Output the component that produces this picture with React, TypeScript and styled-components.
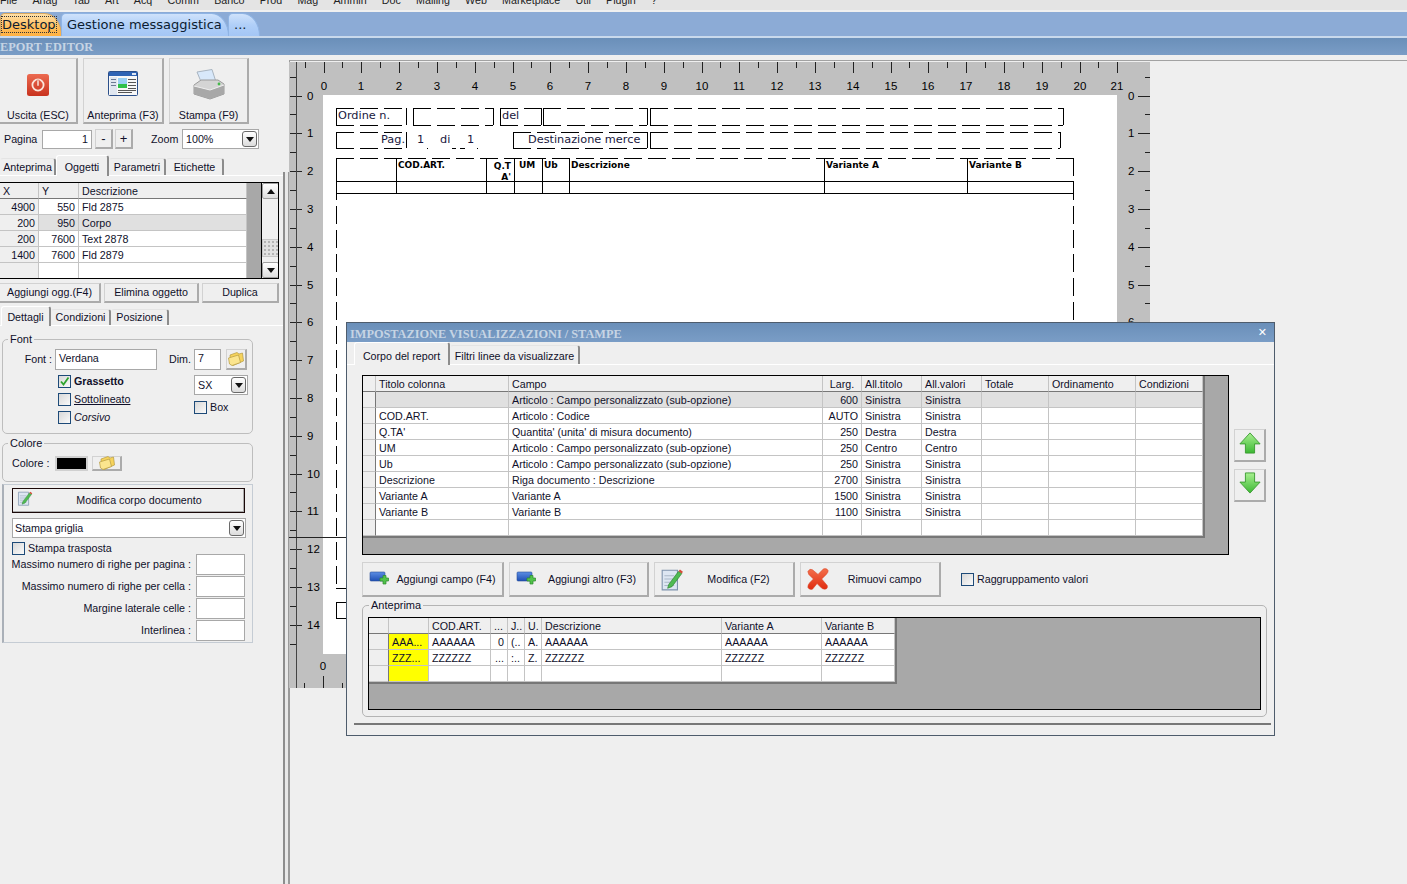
import React from 'react';
import styled, { createGlobalStyle } from 'styled-components';

const GlobalStyle = createGlobalStyle`
  html, body {
    margin: 0;
    padding: 0;
    background: #efefef;
  }
  * {
    box-sizing: border-box;
  }
`;

const Page = styled.div`
  position: relative;
  width: 1407px;
  height: 884px;
  overflow: hidden;
  display: flex;
  flex-direction: column;
  background: #efefef;
  color: #10102a;
  font: 10.7px/13px 'Liberation Sans', Arial, sans-serif;
`;

/* top of the application */
const MenuBar = styled.div`
  height: 10px;
  flex: none;
  overflow: hidden;
  display: flex;
  gap: 15.2px;
  background: #e4e4e4;
  span {
    margin-top: -6px;
    color: #222;
  }
`;

const TabStrip = styled.div`
  height: 28px;
  flex: none;
  display: flex;
  align-items: flex-start;
  padding-top: 1px;
  border-top: 2px solid #f0f0f0;
  border-bottom: 2px solid #c9d9ec;
  background: #8cabd6;
`;

const AppTab = styled.div<{ $active?: boolean; $w: number }>`
  width: ${(p) => p.$w}px;
  height: 23px;
  margin-right: -1px;
  padding: 3px 0 0 ${(p) => (p.$active ? 1 : 5)}px;
  border-radius: 5px 18px 0 0 / 5px 24px 0 0;
  border: 1px solid ${(p) => (p.$active ? '#d8a860' : '#8fb4e4')};
  border-bottom: 0;
  background: ${(p) =>
    p.$active
      ? 'linear-gradient(#ffe0a8, #ffc060 55%, #ffb040)'
      : 'linear-gradient(#cfe2fb, #b0cff8 50%, #a4c6f5)'};
  color: #0c1c30;
  font: 13px/15px 'DejaVu Sans', Verdana, sans-serif;
  white-space: nowrap;
`;

const FocusText = styled.span`
  outline: 1px dotted #333;
`;

const WindowTitle = styled.div<{ $height: number; $indent: number }>`
  height: ${(p) => p.$height}px;
  flex: none;
  display: flex;
  align-items: center;
  justify-content: space-between;
  padding: 0 7px 0 ${(p) => p.$indent}px;
  background: linear-gradient(#6a8fb9, #7a9dc6);
  color: #c6d4e4;
  font: bold 12.3px/16px 'Liberation Serif', 'Times New Roman', serif;
  white-space: nowrap;
`;

const DialogTitleText = styled.span`
  margin-top: 3px;
`;

const Main = styled.div`
  flex: 1;
  display: flex;
  min-height: 0;
`;

/* generic widgets */
const RaisedButton = styled.button<{ $w?: number; $h?: number }>`
  width: ${(p) => (p.$w ? `${p.$w}px` : 'auto')};
  height: ${(p) => (p.$h ? `${p.$h}px` : 'auto')};
  flex: none;
  padding: 0;
  border-style: solid;
  border-width: 1px 2px 2px 1px;
  border-color: #d2d2d2 #ababab #ababab #d2d2d2;
  background: #efefef;
  color: inherit;
  font: inherit;
  display: flex;
  align-items: center;
  justify-content: center;
`;

const FieldBox = styled.div<{ $w: number; $h?: number; $right?: boolean }>`
  width: ${(p) => p.$w}px;
  height: ${(p) => p.$h ?? 20}px;
  flex: none;
  padding: 2px 3px;
  border: 1px solid #a8a8a8;
  background: #fff;
  text-align: ${(p) => (p.$right ? 'right' : 'left')};
`;

const ComboBox = styled(FieldBox)`
  display: flex;
  align-items: center;
  justify-content: space-between;
  padding: 0 1px 0 3px;
`;

const ArrowButton = styled.span`
  width: 15px;
  height: 16px;
  display: flex;
  align-items: center;
  justify-content: center;
  border: 1px solid #6a6a6a;
  border-radius: 3px;
  background: linear-gradient(#fff, #dcdcdc);
  &::after {
    content: '';
    border: 4px solid transparent;
    border-top: 5px solid #111;
    border-bottom: 0;
  }
`;

const Check = styled.span`
  width: 13px;
  height: 13px;
  flex: none;
  display: inline-flex;
  border: 1px solid #1d4a78;
  background: linear-gradient(135deg, #d8d8d8, #fafafa);
`;

const CheckRow = styled.div`
  display: flex;
  align-items: center;
  gap: 3px;
  height: 13px;
`;

const TabRow = styled.div<{ $h: number; $indent: number }>`
  height: ${(p) => p.$h}px;
  display: flex;
  align-items: flex-end;
  padding-left: ${(p) => p.$indent}px;
  border-bottom: 1px solid #fff;
`;

const PaneTab = styled.div<{ $w: number; $active?: boolean }>`
  width: ${(p) => p.$w}px;
  height: ${(p) => (p.$active ? 'calc(100% + 1px)' : 'calc(100% - 3px)')};
  flex: none;
  display: flex;
  align-items: flex-end;
  justify-content: center;
  padding-bottom: ${(p) => (p.$active ? 2 : 1)}px;
  white-space: nowrap;
  border-right: 2px solid #8c8c8c;
  border-top: 1px solid ${(p) => (p.$active ? '#fff' : '#e4e4e4')};
  border-left: 1px solid ${(p) => (p.$active ? '#fff' : '#efefef')};
  margin-bottom: ${(p) => (p.$active ? '-1px' : '0')};
  border-radius: 3px 3px 0 0;
  background: #efefef;
`;

/* data grids */
const GridFrame = styled.div<{ $w: number; $h: number }>`
  width: ${(p) => p.$w}px;
  height: ${(p) => p.$h}px;
  flex: none;
  display: flex;
  align-items: flex-start;
  overflow: hidden;
  border: 1px solid #000;
  background: #a8a8a8;
`;

const GridTable = styled.table<{ $w: number; $edge?: boolean }>`
  width: ${(p) => p.$w}px;
  flex: none;
  table-layout: fixed;
  border-collapse: separate;
  border-spacing: 0;
  background: #fff;
  font: inherit;
  color: inherit;
  ${(p) => (p.$edge ? 'border-right: 2px solid #777; border-bottom: 2px solid #777;' : '')}
`;

const HeadCell = styled.th<{ $center?: boolean }>`
  height: 16px;
  padding: 1px 3px 0;
  overflow: hidden;
  border-right: 1px solid #c4c4c4;
  border-bottom: 1px solid #777;
  background: #efefef;
  font-weight: normal;
  text-align: ${(p) => (p.$center ? 'center' : 'left')};
  white-space: nowrap;
`;

const Cell = styled.td<{ $right?: boolean; $bg?: string }>`
  height: 16px;
  padding: 1px 3px 0;
  overflow: hidden;
  border-right: 1px solid #c4c4c4;
  border-bottom: 1px solid #c4c4c4;
  background: ${(p) => p.$bg ?? 'transparent'};
  text-align: ${(p) => (p.$right ? 'right' : 'left')};
  white-space: nowrap;
`;

const RowHead = styled(Cell)`
  padding: 0;
  background: #efefef;
  border-right-color: #777;
`;

/* left panel */
const LeftPanel = styled.div`
  width: 283px;
  flex: none;
  overflow: hidden;
`;

const Toolbar = styled.div`
  display: flex;
  gap: 5px;
  margin: 3px 0 0 -1px;
`;

const ToolButton = styled(RaisedButton)`
  flex-direction: column;
  justify-content: flex-start;
  padding-top: 10px;
  & > svg {
    height: 31px;
    flex: none;
  }
  & > span {
    margin-top: 9px;
  }
`;

const PagerRow = styled.div`
  display: flex;
  align-items: center;
  height: 20px;
  margin-top: 5px;
  padding-left: 4px;
`;

const PagerLabel = styled.span<{ $w: number }>`
  width: ${(p) => p.$w}px;
  flex: none;
`;

const SmallButton = styled(RaisedButton)`
  margin-right: 2px;
  font-size: 13px;
`;

const TabsTop = styled.div`
  margin-top: 6px;
`;

const ObjectsGridRow = styled.div`
  margin: 6px 0 0 -1px;
`;

const Filler = styled.div`
  width: 14px;
  height: 100%;
  flex: none;
`;

const ScrollBar = styled.div`
  width: 18px;
  height: 100%;
  flex: none;
  display: flex;
  flex-direction: column;
  justify-content: space-between;
  background: #f0f0f0;
  border-left: 1px solid #000;
`;

const ScrollThumb = styled.div`
  height: 18px;
  margin-top: 39px;
  margin-bottom: 5px;
  background: radial-gradient(#b5b5b5 1px, transparent 1px) 0 0 / 4px 4px, #e2e2e2;
  border: 1px solid #c8c8c8;
`;

const ScrollEnd = styled.div<{ $up?: boolean }>`
  height: 16px;
  display: flex;
  align-items: center;
  justify-content: center;
  background: linear-gradient(#fff, #dedede);
  border: 1px solid #a0a0a0;
  border-radius: 2px;
  &::after {
    content: '';
    border: 4px solid transparent;
    ${(p) => (p.$up ? 'border-bottom: 5px solid #111; border-top: 0;' : 'border-top: 5px solid #111; border-bottom: 0;')}
  }
`;

const ObjectActions = styled.div`
  display: flex;
  gap: 3px;
  margin-top: 4px;
  margin-left: -1px;
`;

const TabsBottom = styled.div`
  margin-top: 3px;
  width: 283px;
`;

const Fieldset = styled.fieldset<{ $h: number }>`
  height: ${(p) => p.$h}px;
  width: 251px;
  margin: 0 0 0 2px;
  padding: 0;
  border: 1px solid #bdbdbd;
  border-radius: 5px;
`;

const Legend = styled.legend`
  margin-left: 5px;
  padding: 0 2px;
  font-size: 11px;
  line-height: 12px;
`;

const PreviewLegend = styled(Legend)`
  margin-left: 1px;
`;

const FontFieldset = styled(Fieldset)`
  margin-top: 7px;
`;

const ColorFieldset = styled(Fieldset)`
  margin-top: 3px;
`;

const FontRow = styled.div`
  display: flex;
  align-items: center;
  height: 21px;
  margin-top: 4px;
`;

const RightLabel = styled.span<{ $w: number }>`
  width: ${(p) => p.$w}px;
  flex: none;
  text-align: right;
`;

const FontOptions = styled.div`
  display: flex;
  margin-top: 5px;
`;

const OptionColumn = styled.div`
  width: 191px;
  flex: none;
  padding-left: 55px;
  display: flex;
  flex-direction: column;
  gap: 5px;
`;

const SideColumn = styled.div`
  display: flex;
  flex-direction: column;
  gap: 6px;
`;

const BoldLabel = styled.span`
  font-weight: bold;
`;

const UnderLabel = styled.span`
  text-decoration: underline;
`;

const ItalicLabel = styled.span`
  font-style: italic;
`;

const ColorRow = styled.div`
  display: flex;
  align-items: center;
  height: 18px;
  margin-top: 5px;
  padding-left: 9px;
`;

const ColorSwatch = styled.div`
  width: 33px;
  height: 15px;
  margin-right: 4px;
  border: 2px solid #d0d0d0;
  background: #000;
  box-shadow: inset 0 0 0 1px #000;
`;

const BodyBox = styled.div`
  width: 251px;
  height: 159px;
  margin: 2px 0 0 2px;
  padding: 3px 0 0 8px;
  border: 1px solid #c5ccd4;
  border-left: 2px solid #aab0b8;
`;

const EditBodyButton = styled(RaisedButton)`
  position: relative;
  outline: 1px solid #1a0808;
  outline-offset: -1px;
  justify-content: center;
  padding: 1px 0 0 22px;
  svg {
    position: absolute;
    left: 4px;
    top: 1px;
  }
`;

const BodyCombo = styled(ComboBox)`
  margin-top: 5px;
  padding-left: 2px;
`;

const TransposeRow = styled(CheckRow)`
  margin-top: 4px;
`;

const NumberRows = styled.div`
  margin-top: -2px;
`;

const NumberRow = styled.div`
  display: flex;
  align-items: center;
  justify-content: flex-end;
  gap: 5px;
  width: 233px;
  height: 22px;
  white-space: nowrap;
`;

const Splitter = styled.div`
  width: 6px;
  flex: none;
  margin-top: 117px;
  border-left: 2px solid #8d8d8d;
  border-right: 1px solid #9a9a9a;
  background: #e8e8e8;
`;

/* report canvas */
const Viewport = styled.div`
  flex: 1;
  margin-top: 5px;
  padding: 1px 0 0;
  border-top: 1px solid #a2a2a2;
  border-left: 1px solid #9a9a9a;
`;

const RulerFrame = styled.div`
  position: relative;
  width: 861px;
  height: 626px;
  margin-left: -1px;
  padding: 33px 33px 34px 34px;
  background: #c0c0c0;
`;

const Sheet = styled.div`
  position: relative;
  width: 100%;
  height: 100%;
  background: #fff;
  font-family: 'DejaVu Sans', Verdana, sans-serif;
`;

const Overlay = styled.svg`
  position: absolute;
  left: 0;
  top: 0;
  width: 100%;
  height: 100%;
  overflow: visible;
`;

const ReportText = styled.div<{ $x: number; $y: number; $bold?: boolean; $right?: boolean }>`
  position: absolute;
  ${(p) => (p.$right ? `right: ${1117 - p.$x}px;` : `left: ${p.$x - 323}px;`)}
  top: ${(p) => p.$y - 95}px;
  color: ${(p) => (p.$bold ? '#000' : '#181840')};
  font-size: ${(p) => (p.$bold ? 9 : 11.3)}px;
  font-weight: ${(p) => (p.$bold ? 'bold' : 'normal')};
  line-height: 13px;
  white-space: nowrap;
`;

/* dialog */
const Dialog = styled.div`
  position: absolute;
  left: 346px;
  top: 322px;
  width: 929px;
  height: 414px;
  display: flex;
  flex-direction: column;
  border: 1px solid #4e5c6c;
  background: #efefef;
`;

const CloseMark = styled.span`
  color: #fff;
  font: bold 11px/12px 'DejaVu Sans', sans-serif;
`;

const DialogPane = styled.div`
  width: 917px;
  height: 360px;
  margin-left: 7px;
  padding: 10px 0 0 8px;
  border-bottom: 2px solid #777;
`;

const GridRow = styled.div`
  display: flex;
`;

const MoveColumn = styled.div`
  display: flex;
  flex-direction: column;
  justify-content: center;
  gap: 7px;
  margin-left: 5px;
`;

const MoveButton = styled(RaisedButton)`
  padding-bottom: 3px;
`;

const ActionRow = styled.div`
  display: flex;
  align-items: center;
  gap: 5px;
  margin-top: 7px;
`;

const ActionButton = styled(RaisedButton)`
  justify-content: flex-start;
  padding: 0 0 0 5px;
  span {
    flex: 1;
    text-align: center;
  }
`;

const GroupCheck = styled(CheckRow)`
  margin-left: 15px;
`;

const PreviewFieldset = styled.fieldset`
  width: 905px;
  height: 118px;
  margin: 2px 0 0;
  padding: 6px 0 0 5px;
  border: 1px solid #b4b4b4;
  border-radius: 5px;
`;

/* drawings */
const PowerIcon = () => (
  <svg width="24" height="31" viewBox="0 0 24 31">
    <defs>
      <linearGradient id="pw" x1="0" y1="0" x2="0" y2="1">
        <stop offset="0" stopColor="#ec6a50" />
        <stop offset="1" stopColor="#c8321e" />
      </linearGradient>
    </defs>
    <rect x="1" y="5" width="22" height="22" rx="2.5" fill="url(#pw)" />
    <circle cx="12" cy="16" r="5.6" fill="none" stroke="#fbe6dc" strokeWidth="1.8" />
    <rect x="11" y="11" width="2" height="6" fill="#fbe6dc" stroke="#d04a34" strokeWidth=".5" />
  </svg>
);

const PreviewIcon = () => (
  <svg width="32" height="31" viewBox="0 0 32 31">
    <rect x="1.5" y="2.5" width="29" height="24" rx="1" fill="#f7f7f7" stroke="#2b4f8a" />
    <rect x="2" y="3" width="28" height="4" fill="#2e63b4" />
    <rect x="25" y="4" width="4" height="2" fill="#dfe8f5" />
    <rect x="3" y="8" width="7" height="18" fill="#dfe6f0" />
    <rect x="4" y="10" width="5" height="1" fill="#6a7a94" />
    <rect x="4" y="13" width="5" height="1" fill="#6a7a94" />
    <rect x="4" y="16" width="5" height="1" fill="#6a7a94" />
    <rect x="11" y="9" width="9" height="6" fill="#9ad0f4" />
    <rect x="11" y="15" width="9" height="4" fill="#2fc04a" />
    <rect x="21" y="10" width="8" height="1" fill="#555" />
    <rect x="21" y="13" width="8" height="1" fill="#555" />
    <rect x="21" y="16" width="8" height="1" fill="#555" />
    <rect x="21" y="19" width="8" height="1" fill="#555" />
    <rect x="11" y="21" width="18" height="1" fill="#555" />
    <rect x="11" y="23" width="14" height="1" fill="#555" />
  </svg>
);

const PrinterIcon = () => (
  <svg width="34" height="31" viewBox="0 0 34 31">
    <path d="M5 3 L20 0.5 L24 13 L10 15 Z" fill="#d8e8fa" stroke="#a8b4c0" />
    <path d="M2 16 L9 11 H26 L32 15 V25 L18 30 L2 25 Z" fill="#d4d4d4" stroke="#9a9a9a" />
    <path d="M2 17 L18 21 L32 16 V25 L18 30 L2 25 Z" fill="#a8a8a8" />
    <path d="M2 17 L18 21 L32 16" fill="none" stroke="#efefef" />
    <circle cx="27" cy="15" r="1.4" fill="#45b84a" />
  </svg>
);

const FolderIcon = () => (
  <svg width="18" height="16" viewBox="0 0 18 16">
    <path d="M3 4 L10 1.5 L12 3 L15.5 2 L16.5 10 L6 14.5 L3.5 13 Z" fill="#f6d35c" stroke="#b49a40" strokeWidth=".7" />
    <path d="M1.5 7 L11.5 4 L13.5 11.5 L5 14.5 L2.5 13 Z" fill="#fbe58e" stroke="#b49a40" strokeWidth=".7" />
  </svg>
);

const EditIcon = ({ size }: { size: number }) => (
  <svg width={size} height={size} viewBox="0 0 22 22">
    <path d="M2 3 H16 V21 H2 Z" fill="#dde6f2" stroke="#7f93ad" />
    <path d="M4 8 H13 M4 11 H13 M4 14 H10 M4 17 H13" stroke="#aab8c8" />
    <path d="M8 16 L17 4 L20 6 L11 18 L7 19.5 Z" fill="#4fbb52" stroke="#2c7f30" strokeWidth=".6" />
    <path d="M17 4 L18.3 2.4 L21 4.4 L20 6 Z" fill="#d84a38" />
  </svg>
);

const AddFieldIcon = () => (
  <svg width="22" height="20" viewBox="0 0 22 20">
    <defs>
      <linearGradient id="af" x1="0" y1="0" x2="0" y2="1">
        <stop offset="0" stopColor="#5c8ee4" />
        <stop offset="1" stopColor="#1f4fb4" />
      </linearGradient>
    </defs>
    <rect x="2" y="3" width="15" height="9" rx="1" fill="url(#af)" stroke="#2a4f98" strokeWidth=".6" />
    <path d="M12 9 H15 V6.5 H18 V9 H20.5 V12 H18 V15 H15 V12 H12 Z" fill="#52c24a" stroke="#2d8a2c" strokeWidth=".7" />
  </svg>
);

const RedCross = () => (
  <svg width="24" height="24" viewBox="0 0 26 26">
    <defs>
      <linearGradient id="rc" x1="0" y1="0" x2="0" y2="1">
        <stop offset="0" stopColor="#f4704c" />
        <stop offset="1" stopColor="#e02c10" />
      </linearGradient>
    </defs>
    <path
      d="M2 5 Q4 1 7 3 L13 8 L19 2 Q23 1 24 4 Q24 6 22 8 L17 13 L23 20 Q24 24 20 24 Q18 24 16 22 L12 18 L7 24 Q3 25 2 22 Q2 19 4 17 L8 13 L3 8 Z"
      fill="url(#rc)"
      stroke="#d84020"
      strokeWidth=".6"
    />
  </svg>
);

const MoveArrow = ({ down }: { down?: boolean }) => (
  <svg width="22" height="22" viewBox="0 0 24 24">
    <defs>
      <linearGradient id="mv" x1="0" y1="0" x2="0" y2="1">
        <stop offset="0" stopColor="#a8f090" />
        <stop offset="1" stopColor="#3cb834" />
      </linearGradient>
    </defs>
    <path
      d={down ? 'M7 1 H17 V11 H23 L12 23 L1 11 H7 Z' : 'M12 1 L23 13 H17 V23 H7 V13 H1 Z'}
      fill="url(#mv)"
      stroke="#3a9a30"
    />
  </svg>
);

const CheckMark = () => (
  <svg width="11" height="11" viewBox="0 0 11 11">
    <path d="M2 5.5 L4.5 8.5 L9.5 1.5" fill="none" stroke="#2fa52f" strokeWidth="1.8" />
  </svg>
);

const CM = 37.8;
const range = (n: number) => Array.from({ length: n }, (_, i) => i);

const Ruler = () => {
  const line = '#222';
  return (
    <Overlay viewBox="289 62 861 626" fontFamily="'Liberation Sans', Arial, sans-serif" fontSize="11.5">
      {range(22).map((i) => {
        const x = Math.round(323.5 + i * CM) + 0.5;
        return (
          <g key={i}>
            <path d={`M${x} 62 V73`} stroke={line} />
            <text x={x - 0.5} y={90} textAnchor="middle" fill="#000">{i}</text>
          </g>
        );
      })}
      {range(22).map((i) => {
        const x = Math.round(304.6 + i * CM) + 0.5;
        return <path key={i} d={`M${x} 62 V68`} stroke={line} />;
      })}
      {range(15).map((i) => {
        const y = Math.round(95.5 + i * CM) + 0.5;
        return (
          <g key={i}>
            <path d={`M290 ${y} H302 M1138 ${y} H1150`} stroke={line} />
            <text x={307} y={y + 3.5} fill="#000">{i}</text>
            <text x={1128} y={y + 3.5} fill="#000">{i}</text>
          </g>
        );
      })}
      {range(16).map((i) => {
        const y = Math.round(76.6 + i * CM) + 0.5;
        return <path key={i} d={`M290 ${y} H297 M1145 ${y} H1150`} stroke={line} />;
      })}
      <path d="M296.5 62 V688" stroke="#444" />
      <path d="M289 537.5 H347" stroke="#222" />
      <text x={323} y={670} textAnchor="middle" fill="#000">0</text>
      <path d="M323.5 676 V688 M304.5 683 V688 M342.5 683 V688" stroke={line} />
    </Overlay>
  );
};

// dashed frames as the print engine draws them: 18 on, 6 off
const dashed = [
  'M336 108.5 H406', 'M336 125.5 H406', 'M406.5 108 V125',
  'M413 108.5 H493', 'M413 125.5 H493', 'M493.5 108 V125',
  'M500 108.5 H541', 'M500 125.5 H541', 'M541.5 108 V125',
  'M543 108.5 H647', 'M543 125.5 H647', 'M647.5 108 V125',
  'M650 108.5 H1063', 'M650 125.5 H1063', 'M1063.5 108 V125',
  'M336 132.5 H406', 'M336 148.5 H406', 'M406.5 132 V148',
  'M513 132.5 H647', 'M513 148.5 H647', 'M647.5 132 V148',
  'M650 132.5 H1060', 'M650 148.5 H1060', 'M1060.5 132 V148',
  'M336 158.5 H1073', 'M336.5 158 V588', 'M1073.5 158 V588',
  'M336 602.5 H347', 'M336 618.5 H347',
];

const solid = [
  'M336.5 108 V125', 'M413.5 108 V125', 'M500.5 108 V125', 'M543.5 108 V125', 'M650.5 108 V125',
  'M336.5 132 V148', 'M513.5 132 V148', 'M650.5 132 V148',
  'M336 181.5 H1073', 'M336 193.5 H1073',
  'M336.5 158 V193', 'M396.5 158 V193', 'M486.5 158 V193', 'M514.5 158 V193', 'M542.5 158 V193',
  'M569.5 158 V193', 'M824.5 158 V193', 'M967.5 158 V193', 'M1073.5 181 V193',
  'M336 588.5 H347', 'M336.5 602 V618',
  'M427 148.5 H428', 'M452 148.5 H456', 'M460 148.5 H465', 'M477 148.5 H478',
];

const ReportLines = () => (
  <Overlay viewBox="323 95 794 559" fill="none" stroke="#000">
    {dashed.map((d) => <path key={d} d={d} strokeDasharray="18 6" />)}
    {solid.map((d) => <path key={d} d={d} />)}
  </Overlay>
);

const reportTexts: { t: string; x: number; y: number; bold?: boolean; right?: boolean }[] = [
  { t: 'Ordine n.', x: 338, y: 109 },
  { t: 'del', x: 502, y: 109 },
  { t: 'Pag.', x: 405, y: 133, right: true },
  { t: '1', x: 417, y: 133 },
  { t: 'di', x: 440, y: 133 },
  { t: '1', x: 467, y: 133 },
  { t: 'Destinazione merce', x: 528, y: 133 },
  { t: 'COD.ART.', x: 398, y: 159, bold: true },
  { t: 'Q.T', x: 511, y: 160, bold: true, right: true },
  { t: "A'", x: 511, y: 171, bold: true, right: true },
  { t: 'UM', x: 519, y: 159, bold: true },
  { t: 'Ub', x: 544, y: 159, bold: true },
  { t: 'Descrizione', x: 571, y: 159, bold: true },
  { t: 'Variante A', x: 826, y: 159, bold: true },
  { t: 'Variante B', x: 969, y: 159, bold: true },
];

const objectRows = [
  ['4900', '550', 'Fld 2875'],
  ['200', '950', 'Corpo'],
  ['200', '7600', 'Text 2878'],
  ['1400', '7600', 'Fld 2879'],
  ['', '', ''],
];

const bodyWidths = [13, 133, 314, 39, 60, 60, 67, 87, 67];
const bodyHeads = ['', 'Titolo colonna', 'Campo', 'Larg.', 'All.titolo', 'All.valori', 'Totale', 'Ordinamento', 'Condizioni'];
const bodyRows = [
  ['', 'Articolo : Campo personalizzato (sub-opzione)', '600', 'Sinistra', 'Sinistra'],
  ['COD.ART.', 'Articolo : Codice', 'AUTO', 'Sinistra', 'Sinistra'],
  ["Q.TA'", "Quantita' (unita' di misura documento)", '250', 'Destra', 'Destra'],
  ['UM', 'Articolo : Campo personalizzato (sub-opzione)', '250', 'Centro', 'Centro'],
  ['Ub', 'Articolo : Campo personalizzato (sub-opzione)', '250', 'Sinistra', 'Sinistra'],
  ['Descrizione', 'Riga documento : Descrizione', '2700', 'Sinistra', 'Sinistra'],
  ['Variante A', 'Variante A', '1500', 'Sinistra', 'Sinistra'],
  ['Variante B', 'Variante B', '1100', 'Sinistra', 'Sinistra'],
  ['', '', '', '', ''],
];

const previewWidths = [20, 40, 62, 17, 17, 17, 180, 100, 73];
const previewHeads = ['', '', 'COD.ART.', '...', 'J..', 'U.', 'Descrizione', 'Variante A', 'Variante B'];
const previewRows = [
  ['AAA...', 'AAAAAA', '0', '(..', 'A.', 'AAAAAA', 'AAAAAA', 'AAAAAA'],
  ['ZZZ...', 'ZZZZZZ', '...', ':..', 'Z.', 'ZZZZZZ', 'ZZZZZZ', 'ZZZZZZ'],
  ['', '', '', '', '', '', '', ''],
];

const sum = (list: number[]) => list.reduce((a, b) => a + b, 0);

const App: React.FC = () => {
  return (
    <Page>
      <GlobalStyle />
      <MenuBar>
        {['File', 'Anag', 'Tab', 'Art', 'Acq', 'Comm', 'Banco', 'Prod', 'Mag', 'Ammin', 'Doc', 'Mailing', 'Web', 'Marketplace', 'Util', 'Plugin', '?'].map((m) => (
          <span key={m}>{m}</span>
        ))}
      </MenuBar>
      <TabStrip>
        <AppTab $active $w={62}><FocusText>Desktop</FocusText></AppTab>
        <AppTab $w={168}>Gestione messaggistica</AppTab>
        <AppTab $w={32}>...</AppTab>
      </TabStrip>
      <WindowTitle $height={17} $indent={0}>
        <span>EPORT EDITOR</span>
      </WindowTitle>
      <Main>
        <LeftPanel>
          <Toolbar>
            <ToolButton $w={79} $h={66}><PowerIcon /><span>Uscita (ESC)</span></ToolButton>
            <ToolButton $w={81} $h={66}><PreviewIcon /><span>Anteprima (F3)</span></ToolButton>
            <ToolButton $w={80} $h={66}><PrinterIcon /><span>Stampa (F9)</span></ToolButton>
          </Toolbar>
          <PagerRow>
            <PagerLabel $w={38}>Pagina</PagerLabel>
            <FieldBox $w={50} $h={19} $right>1</FieldBox>
            <PagerLabel $w={3} />
            <SmallButton $w={18} $h={20}>-</SmallButton>
            <SmallButton $w={18} $h={20}>+</SmallButton>
            <PagerLabel $w={16} />
            <PagerLabel $w={31}>Zoom</PagerLabel>
            <ComboBox $w={77} $h={20}>100%<ArrowButton /></ComboBox>
          </PagerRow>
          <TabsTop>
            <TabRow $h={21} $indent={0}>
              <PaneTab $w={56}>Anteprima</PaneTab>
              <PaneTab $w={53} $active>Oggetti</PaneTab>
              <PaneTab $w={57}>Parametri</PaneTab>
              <PaneTab $w={58}>Etichette</PaneTab>
            </TabRow>
          </TabsTop>
          <ObjectsGridRow>
            <GridFrame $w={280} $h={97}>
              <GridTable $w={247}>
                <colgroup>
                  <col width={39} />
                  <col width={40} />
                  <col width={168} />
                </colgroup>
                <thead>
                  <tr>
                    <HeadCell>X</HeadCell>
                    <HeadCell>Y</HeadCell>
                    <HeadCell>Descrizione</HeadCell>
                  </tr>
                </thead>
                <tbody>
                  {objectRows.map((r, i) => (
                    <tr key={i}>
                      <Cell $right $bg="#efefef">{r[0]}</Cell>
                      <Cell $right $bg={i === 1 ? '#e0e0e0' : undefined}>{r[1]}</Cell>
                      <Cell $bg={i === 1 ? '#e0e0e0' : undefined}>{r[2]}</Cell>
                    </tr>
                  ))}
                </tbody>
              </GridTable>
              <Filler />
              <ScrollBar>
                <ScrollEnd $up />
                <ScrollThumb />
                <ScrollEnd />
              </ScrollBar>
            </GridFrame>
          </ObjectsGridRow>
          <ObjectActions>
            <RaisedButton $w={102} $h={20}>Aggiungi ogg.(F4)</RaisedButton>
            <RaisedButton $w={95} $h={20}>Elimina oggetto</RaisedButton>
            <RaisedButton $w={77} $h={20}>Duplica</RaisedButton>
          </ObjectActions>
          <TabsBottom>
            <TabRow $h={20} $indent={1}>
              <PaneTab $w={50} $active>Dettagli</PaneTab>
              <PaneTab $w={60}>Condizioni</PaneTab>
              <PaneTab $w={58}>Posizione</PaneTab>
            </TabRow>
          </TabsBottom>
          <FontFieldset $h={101}>
            <Legend>Font</Legend>
            <FontRow>
              <RightLabel $w={49}>Font :</RightLabel>
              <PagerLabel $w={3} />
              <FieldBox $w={102} $h={21}>Verdana</FieldBox>
              <PagerLabel $w={12} />
              <PagerLabel $w={25}>Dim.</PagerLabel>
              <FieldBox $w={27} $h={21}>7</FieldBox>
              <PagerLabel $w={5} />
              <RaisedButton $w={21} $h={21}><FolderIcon /></RaisedButton>
            </FontRow>
            <FontOptions>
              <OptionColumn>
                <CheckRow><Check><CheckMark /></Check><BoldLabel>Grassetto</BoldLabel></CheckRow>
                <CheckRow><Check /><UnderLabel>Sottolineato</UnderLabel></CheckRow>
                <CheckRow><Check /><ItalicLabel>Corsivo</ItalicLabel></CheckRow>
              </OptionColumn>
              <SideColumn>
                <ComboBox $w={54} $h={20}>SX<ArrowButton /></ComboBox>
                <CheckRow><Check />Box</CheckRow>
              </SideColumn>
            </FontOptions>
          </FontFieldset>
          <ColorFieldset $h={45}>
            <Legend>Colore</Legend>
            <ColorRow>
              <PagerLabel $w={43}>Colore :</PagerLabel>
              <ColorSwatch />
              <RaisedButton $w={30} $h={15}><FolderIcon /></RaisedButton>
            </ColorRow>
          </ColorFieldset>
          <BodyBox>
            <EditBodyButton $w={233} $h={25}>
              <EditIcon size={16} />
              Modifica corpo documento
            </EditBodyButton>
            <BodyCombo $w={234} $h={20}>Stampa griglia<ArrowButton /></BodyCombo>
            <TransposeRow><Check />Stampa trasposta</TransposeRow>
            <NumberRows>
              {['Massimo numero di righe per pagina :', 'Massimo numero di righe per cella :', 'Margine laterale celle :', 'Interlinea :'].map((l) => (
                <NumberRow key={l}>
                  {l}
                  <FieldBox $w={49} $h={21} />
                </NumberRow>
              ))}
            </NumberRows>
          </BodyBox>
        </LeftPanel>
        <Splitter />
        <Viewport>
          <RulerFrame>
            <Sheet>
              <ReportLines />
              {reportTexts.map((r) => (
                <ReportText key={r.t + r.x} $x={r.x} $y={r.y} $bold={r.bold} $right={r.right}>{r.t}</ReportText>
              ))}
            </Sheet>
            <Ruler />
          </RulerFrame>
        </Viewport>
      </Main>
      <Dialog>
        <WindowTitle $height={19} $indent={3}>
          <DialogTitleText>IMPOSTAZIONE VISUALIZZAZIONI / STAMPE</DialogTitleText>
          <CloseMark>✕</CloseMark>
        </WindowTitle>
        <TabRow $h={23} $indent={7}>
          <PaneTab $w={96} $active>Corpo del report</PaneTab>
          <PaneTab $w={130}>Filtri linee da visualizzare</PaneTab>
        </TabRow>
        <DialogPane>
          <GridRow>
            <GridFrame $w={867} $h={180}>
              <GridTable $w={sum(bodyWidths) + 2} $edge>
                <colgroup>
                  {bodyWidths.map((w, i) => <col key={i} width={w} />)}
                </colgroup>
                <thead>
                  <tr>{bodyHeads.map((h, i) => <HeadCell key={i} $center={h === 'Larg.'}>{h}</HeadCell>)}</tr>
                </thead>
                <tbody>
                  {bodyRows.map((r, i) => {
                    const bg = i === 0 ? '#e0e0e0' : undefined;
                    return (
                      <tr key={i}>
                        <RowHead />
                        <Cell $bg={bg}>{r[0]}</Cell>
                        <Cell $bg={bg}>{r[1]}</Cell>
                        <Cell $bg={bg} $right>{r[2]}</Cell>
                        <Cell $bg={bg}>{r[3]}</Cell>
                        <Cell $bg={bg}>{r[4]}</Cell>
                        <Cell $bg={bg} />
                        <Cell $bg={bg} />
                        <Cell $bg={bg} />
                      </tr>
                    );
                  })}
                </tbody>
              </GridTable>
            </GridFrame>
            <MoveColumn>
              <MoveButton $w={32} $h={33}><MoveArrow /></MoveButton>
              <MoveButton $w={32} $h={33}><MoveArrow down /></MoveButton>
            </MoveColumn>
          </GridRow>
          <ActionRow>
            <ActionButton $w={142} $h={35}><AddFieldIcon /><span>Aggiungi campo (F4)</span></ActionButton>
            <ActionButton $w={140} $h={35}><AddFieldIcon /><span>Aggiungi altro (F3)</span></ActionButton>
            <ActionButton $w={141} $h={35}><EditIcon size={24} /><span>Modifica (F2)</span></ActionButton>
            <ActionButton $w={141} $h={35}><RedCross /><span>Rimuovi campo</span></ActionButton>
            <GroupCheck><Check />Raggruppamento valori</GroupCheck>
          </ActionRow>
          <PreviewFieldset>
            <PreviewLegend>Anteprima</PreviewLegend>
            <GridFrame $w={893} $h={93}>
              <GridTable $w={sum(previewWidths) + 2} $edge>
                <colgroup>
                  {previewWidths.map((w, i) => <col key={i} width={w} />)}
                </colgroup>
                <thead>
                  <tr>{previewHeads.map((h, i) => <HeadCell key={i}>{h}</HeadCell>)}</tr>
                </thead>
                <tbody>
                  {previewRows.map((r, i) => (
                    <tr key={i}>
                      <RowHead />
                      {r.map((c, j) => (
                        <Cell key={j} $bg={j === 0 ? '#ffff00' : undefined} $right={j === 2}>{c}</Cell>
                      ))}
                    </tr>
                  ))}
                </tbody>
              </GridTable>
            </GridFrame>
          </PreviewFieldset>
        </DialogPane>
      </Dialog>
    </Page>
  );
};

export default App;
